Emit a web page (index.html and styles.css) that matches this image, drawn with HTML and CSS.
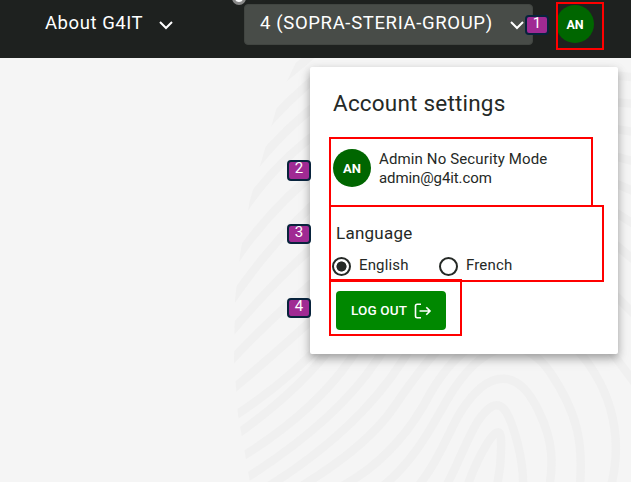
FILE: index.html
```html
<!DOCTYPE html>
<html lang="en">
<head>
<meta charset="utf-8">
<title>G4IT</title>
<link rel="stylesheet" href="styles.css">
</head>
<body>
<header class="topbar">
  <div class="about"><span class="about-text">About G4IT</span><svg class="chevron" viewBox="0 0 16 10"><path d="M2 2l6 6 6-6"/></svg></div>
  <div class="org"><span class="org-text">4 (SOPRA-STERIA-GROUP)</span><svg class="chevron" viewBox="0 0 16 10"><path d="M2 2l6 6 6-6"/></svg></div>
  <div class="avatar">AN</div>
</header>
<main class="page">
  <svg class="fingerprint" viewBox="0 58 631 424">
    <clipPath id="edge"><path d="M298 58L280 96 264 152 250 200 240 255 235 300 234 360 238 415 250 482H631V58z"/></clipPath>
    <g clip-path="url(#edge)">
      <path d="M270 90L320 48M258 135Q285 102 325 70M248 175Q280 132 325 98M242 212Q275 162 325 127M232 265Q270 207 325 165"/>
      <path d="M225 310Q275 235 330 190M222 343Q275 278 330 232M222 370Q275 313 330 268M222 398Q280 350 330 303M222 424Q285 385 325 340"/>
      <path d="M230 439Q295 395 333 345M230 464Q310 417 350 360L358 348M240 482Q335 423 377 360L385 348M256 494Q355 435 403 360L411 348"/>
      <path d="M295 490Q366 448 394 407T438 350M335 490C385 465 414 425 431 392Q453 355 480 341M375 492C414 465 435 420 447 400C480 344 520 330 550 372C579 415 583 445 580 485"/>
      <path d="M415 490C438 463 449 431 460 413C490 365 520 370 539 412C554 442 553 465 549 490M444 490C459 463 466 440 478 421C500 389 509 410 518 445Q524 470 523 490M466 490C476 460 500 414 501 440Q502 465 496 490"/>
      <path d="M570 342C608 380 626 432 610 490M610 350L640 390M610 290L640 320M610 240L640 265M610 209L640 228M610 181L640 194M610 155L640 163M610 128L640 133M610 102L640 104M610 75L640 78"/>
    </g>
  </svg>
</main>
<section class="card">
  <h1 class="title">Account settings</h1>
  <div class="user">
    <div class="avatar">AN</div>
    <div class="identity"><div class="name">Admin No Security Mode</div><div class="email">admin@g4it.com</div></div>
  </div>
  <h2 class="language">Language</h2>
  <div class="options">
    <label class="option"><span class="radio selected"></span><span class="english">English</span></label>
    <label class="option"><span class="radio"></span><span class="french">French</span></label>
  </div>
  <button class="logout"><span class="logout-text">LOG OUT</span><svg class="exit" viewBox="0 0 18 16"><path d="M7 1.2H3.2Q1.5 1.2 1.5 2.9v10.2Q1.5 14.8 3.2 14.8H7M5.5 8h10.3M12.3 4.3L16 8l-3.7 3.7"/></svg></button>
</section>
<div class="handle"></div>
<div class="outline outline-avatar"></div>
<div class="outline outline-user"></div>
<div class="outline outline-language"></div>
<div class="outline outline-logout"></div>
<div class="marker marker-1">1</div>
<div class="marker marker-2">2</div>
<div class="marker marker-3">3</div>
<div class="marker marker-4">4</div>
</body>
</html>
```
FILE: styles.css
```css
* { box-sizing: border-box; }
body {
  margin: 0;
  width: 631px;
  height: 482px;
  overflow: hidden;
  position: relative;
  background: #f5f5f5;
  color: #252926;
  font-family: Roboto, "Liberation Sans", sans-serif;
}
.topbar {
  display: flex;
  height: 58px;
  background: #1e211f;
  color: #fff;
  padding: 4px 0 0 45px;
}
.about, .org { display: flex; align-items: center; height: 41px; white-space: nowrap; }
.about { width: 199px; gap: 15px; }
.about-text, .org-text { font-size: 18.5px; margin-top: -3px; }
.about-text { letter-spacing: 0.55px; width: 98px; }
.org {
  width: 289px;
  padding-left: 15px;
  border-radius: 4px;
  background: #484c48;
  border: 1px solid #414541;
}
.org-text { letter-spacing: 0.65px; width: 249px; }
.chevron {
  width: 16px;
  height: 10px;
  flex: none;
  fill: none;
  stroke: #fff;
  stroke-width: 2;
}
.avatar {
  width: 38px;
  height: 38px;
  flex: none;
  display: flex;
  align-items: center;
  justify-content: center;
  border-radius: 50%;
  background: #006600;
  color: #fff;
  font-size: 13px;
  font-weight: 700;
}
.topbar .avatar { margin: 1px 0 0 23px; font-size: 12.5px; }
.page { height: 424px; }
.fingerprint {
  display: block;
  width: 631px;
  height: 424px;
  fill: none;
  stroke: #f0f0f0;
  stroke-width: 8.5;
}
.card {
  position: absolute;
  left: 310px;
  top: 67px;
  width: 308px;
  height: 287px;
  padding: 23px 23px 0;
  border-radius: 2px;
  background: #fff;
  box-shadow: 0 4px 8px rgba(0, 0, 0, .28), 0 5px 14px rgba(0, 0, 0, .1);
}
.title { margin: 0; font-size: 22.5px; line-height: 27px; font-weight: 400; letter-spacing: 0.2px; }
.user { display: flex; gap: 8px; margin-top: 32px; }
.identity { font-size: 15px; line-height: 19px; white-space: nowrap; padding-top: 1px; }
.name { letter-spacing: 0.13px; }
.email { letter-spacing: -0.1px; }
.language { margin: 35px 0 0 3px; font-size: 17px; line-height: 20px; font-weight: 400; letter-spacing: 0.25px; padding-top: 1px; }
.user { height: 38px; }
.options { display: flex; gap: 31px; margin-top: 13px; }
.option { display: flex; align-items: center; height: 20px; gap: 7px; font-size: 15px; }
.option:first-child { width: 75px; }
.option:last-child { gap: 8px; }
.english, .french { margin-top: -2px; letter-spacing: 0.15px; }
.radio {
  width: 19px;
  height: 19px;
  flex: none;
  border: 2px solid #252926;
  border-radius: 50%;
  background: #fff;
}
.selected { background: radial-gradient(circle, #252926 4.7px, #fff 5.4px); margin-left: -1px; margin-right: 1px; }
.logout {
  display: flex;
  align-items: center;
  width: 110px;
  height: 39px;
  margin: 15px 0 0 3px;
  padding: 0 0 0 15px;
  gap: 6px;
  border: 0;
  border-radius: 4px;
  background: #008800;
  color: #fff;
  font: 500 13.5px Roboto, "Liberation Sans", sans-serif;
}
.logout-text { width: 57px; text-align: left; white-space: nowrap; letter-spacing: 0.15px; margin-top: -1px; }
.exit { width: 18px; height: 16px; flex: none; fill: none; stroke: #fff; stroke-width: 1.6; }
.handle {
  position: absolute;
  left: 232px;
  top: -9px;
  width: 14px;
  height: 14px;
  border: 3px solid #888;
  border-radius: 50%;
  background: #fff;
}
.outline { position: absolute; border: 2px solid #f00; }
.outline-avatar { left: 556px; top: 2px; width: 48px; height: 48px; }
.outline-user { left: 329px; top: 137px; width: 264px; height: 70px; }
.outline-language { left: 329px; top: 205px; width: 275px; height: 77px; }
.outline-logout { left: 329px; top: 279px; width: 133px; height: 57px; }
.marker {
  position: absolute;
  left: 287px;
  width: 24px;
  height: 21px;
  border: 2px solid #08233c;
  border-radius: 4px;
  background: #a02a93;
  color: #fff;
  font-size: 15px;
  line-height: 13px;
  text-align: center;
}
.marker-1 { left: 525px; top: 15px; height: 20px; }
.marker-2 { top: 160px; }
.marker-3 { top: 224px; height: 20px; }
.marker-4 { top: 298px; height: 20px; }
```
